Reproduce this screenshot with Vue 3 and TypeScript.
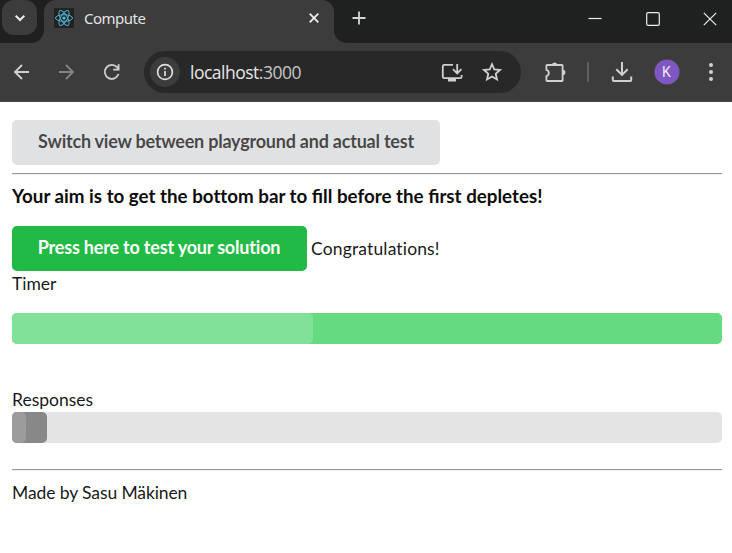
<script setup lang="ts">
import { computed, ref } from 'vue'

const timer = ref(100)
const timerPulse = ref(42.4)
const responses = ref(4.93)
const responsesPulse = ref(40)
const timerStyle = computed(() => ({ width: `${timer.value}%` }))
const timerPulseStyle = computed(() => ({ width: `${timerPulse.value}%` }))
const responsesStyle = computed(() => ({ width: `${responses.value}%` }))
const responsesPulseStyle = computed(() => ({ width: `${responsesPulse.value}%` }))
</script>

<template>
  <div class="window">
    <header class="tabstrip">
      <div class="search-wrap">
        <button class="tab-search" aria-label="Search tabs">
          <svg width="12" height="8" viewBox="0 0 12 8"><path d="M1.7 1.7 6 6l4.3-4.3" /></svg>
        </button>
      </div>
      <div class="tab-slot">
        <div class="tab">
          <svg class="favicon" width="20" height="20" viewBox="0 0 20 20">
            <rect width="20" height="20" rx="1.5" />
            <g transform="translate(10 10)">
              <ellipse rx="8.5" ry="3.3" />
              <ellipse rx="8.5" ry="3.3" transform="rotate(60)" />
              <ellipse rx="8.5" ry="3.3" transform="rotate(120)" />
              <circle r="1.6" />
            </g>
          </svg>
          <span class="tab-title">Compute</span>
          <svg class="tab-close" width="12" height="12" viewBox="0 0 12 12"><path d="m1.7 1.7 8.6 8.6m0-8.6-8.6 8.6" /></svg>
        </div>
      </div>
      <div class="strip-end">
        <svg class="new-tab" width="14" height="14" viewBox="0 0 14 14"><path d="M7 .5v13M.5 7h13" /></svg>
        <div class="controls">
          <svg width="14" height="14" viewBox="0 0 14 14"><path d="M.5 6.5h13" /></svg>
          <svg width="14" height="14" viewBox="0 0 14 14"><rect x=".7" y=".7" width="12.6" height="12.6" rx="1.4" /></svg>
          <svg width="14" height="14" viewBox="0 0 14 14"><path d="m.8.8 12.4 12.4m0-12.4L.8 13.2" /></svg>
        </div>
      </div>
    </header>

    <nav class="toolbar">
      <svg class="icon back" width="24" height="24" viewBox="0 0 24 24"><path d="M19 12H5.5M12 5l-7 7 7 7" /></svg>
      <svg class="icon forward" width="24" height="24" viewBox="0 0 24 24"><path d="M5 12h13.5M12 5l7 7-7 7" /></svg>
      <svg class="icon reload" width="24" height="24" viewBox="0 0 24 24"><path d="M18.5 14A7 7 0 1 1 17 7.2l1.5 1.7M18.6 4.2v5.4h-5.4" /></svg>
      <div class="address">
        <span class="info">
          <svg width="18" height="18" viewBox="0 0 18 18"><circle cx="9" cy="9" r="7.4" /><path d="M9 8v5M9 4.8v1.8" /></svg>
        </span>
        <span class="url">localhost<span class="port">:3000</span></span>
        <svg class="icon install" width="24" height="24" viewBox="0 0 24 24">
          <path d="M13 4.8H4.2a1.4 1.4 0 0 0-1.4 1.4v10.6a1.4 1.4 0 0 0 1.4 1.4h16a1.4 1.4 0 0 0 1.4-1.4V15M17.2 4v9M13 9.2l4.2 4.2 4.2-4.2" />
          <path class="solid" d="M8 18h8v3.5H8z" />
        </svg>
        <svg class="icon star" width="24" height="24" viewBox="0 0 24 24"><path d="m12 4.2 2.3 5.3 5.7.5-4.300 3.800 1.300 5.700-5-3-5 3 1.300-5.700L4 10l5.700-.5z" /></svg>
      </div>
      <svg class="icon extension" width="24" height="24" viewBox="0 0 24 24">
        <path d="M4.2 5h14.6a.8.8 0 0 1 .8.8v14.4a.8.8 0 0 1-.8.8H4.2a.8.8 0 0 1-.8-.8v-4.1a3.2 3.2 0 0 0 0-6.2V5.8a.8.8 0 0 1 .8-.8z" />
        <path class="solid" d="M9 5a2.6 2.6 0 0 1 5.2 0zM19.8 9.8a2.6 2.6 0 0 1 0 5.2z" />
      </svg>
      <span class="separator" />
      <svg class="icon download" width="24" height="24" viewBox="0 0 24 24"><path d="M12 2v12.5M6.3 9.2 12 14.9l5.7-5.7M2.8 16.5v3.6a1 1 0 0 0 1 1h16.4a1 1 0 0 0 1-1v-3.6" /></svg>
      <span class="avatar">K</span>
      <svg class="menu" width="4" height="20" viewBox="0 0 4 20"><circle cx="2" cy="3" r="2" /><circle cx="2" cy="10" r="2" /><circle cx="2" cy="17" r="2" /></svg>
    </nav>

    <main class="page">
      <button class="button switch">Switch view between playground and actual test</button>
      <hr />
      <h3>Your aim is to get the bot&zwnj;tom bar to fill before the first depletes!</h3>
      <div class="action">
        <button class="button positive">Press here to test your solution</button>
        <span class="result">Congratulations!</span>
      </div>
      <div class="label">Timer</div>
      <div class="progress timer">
        <div class="bar" :style="timerStyle"><div class="pulse" :style="timerPulseStyle" /></div>
      </div>
      <div class="label">Responses</div>
      <div class="progress responses">
        <div class="bar" :style="responsesStyle"><div class="pulse" :style="responsesPulseStyle" /></div>
      </div>
      <hr />
      <footer class="label">Made by Sasu Mäkinen</footer>
    </main>
  </div>
</template>

<style>
body {
  margin: 0;
  background: #fff;
}
</style>

<style scoped>
* {
  box-sizing: border-box;
}
.window {
  height: 553px;
  overflow: hidden;
  background: #fff;
}
button {
  border: 0;
  padding: 0;
}
svg {
  display: block;
  flex: none;
  fill: none;
}
.tabstrip {
  display: flex;
  height: 43px;
  background: #3c3c3c;
}
.search-wrap {
  width: 44px;
  padding-left: 2px;
  background: #1f2120;
  border-bottom-right-radius: 13px;
}
.tab-search {
  display: grid;
  place-items: center;
  width: 35px;
  height: 35px;
  border-radius: 12px;
  background: #3c3c3c;
}
.tab-search path {
  stroke: #eee;
  stroke-width: 2;
}
.tab-slot {
  width: 290px;
  background: linear-gradient(#1f2120 50%, #3c3c3c 50%);
}
.tab {
  display: flex;
  align-items: center;
  height: 43px;
  padding: 0 14px 7px 10px;
  background: #3c3c3c;
  border-radius: 12px 12px 0 0;
}
.favicon rect {
  fill: #222;
}
.favicon ellipse {
  stroke: #4fb3d1;
  stroke-width: 1;
}
.favicon circle {
  fill: #5bc4e2;
}
.tab-title {
  margin-left: 10px;
  font: 15px/20px "Noto Sans", sans-serif;
  letter-spacing: -0.5px;
  color: #e3e3e3;
}
.tab-close {
  margin-left: auto;
}
.tab-close path {
  stroke: #eee;
  stroke-width: 1.8;
}
.strip-end {
  display: flex;
  flex: 1;
  background: #1f2120;
  border-bottom-left-radius: 13px;
}
.new-tab {
  margin: 11px 0 0 18px;
}
.new-tab path {
  stroke: #d5d5d5;
  stroke-width: 1.8;
}
.controls {
  display: flex;
  gap: 43px;
  margin: 12px 15px 0 auto;
}
.controls svg:first-child {
  margin-right: 1px;
  margin-left: -1px;
}
.controls path,
.controls rect {
  stroke: #eee;
  stroke-width: 1.2;
}
.toolbar {
  display: flex;
  align-items: center;
  height: 59px;
  padding: 0 19px 0 10px;
  background: #3c3c3c;
  border-bottom: 1px solid #4a4a4a;
}
.icon path {
  stroke: #d0d0d0;
  stroke-width: 1.8;
}
.icon .solid {
  fill: #d0d0d0;
  stroke: none;
}
.icon.forward {
  margin-left: 20px;
}
.icon.forward path {
  stroke: #858585;
}
.reload {
  margin-left: 22px;
}
.address {
  display: flex;
  align-items: center;
  width: 377px;
  height: 42px;
  margin-left: 20px;
  padding: 0 17.5px 0 6px;
  border-radius: 21px;
  background: #282828;
}
.info {
  display: grid;
  place-items: center;
  width: 30px;
  height: 30px;
  border-radius: 50%;
  background: #3c3c3c;
}
.info circle,
.info path {
  stroke: #e0e0e0;
  stroke-width: 1.7;
}
.url {
  margin-left: 10px;
  font: 17.5px/24px "Open Sans", sans-serif;
  letter-spacing: -0.5px;
  color: #e6e6e6;
}
.port {
  color: #c6c6c6;
}
.install {
  margin-left: auto;
}
.star {
  margin-left: 16px;
}
.extension {
  margin-left: 22px;
}
.separator {
  width: 2px;
  height: 20px;
  margin-left: 20px;
  background: #606060;
}
.download {
  margin-left: 20.5px;
}
.download path {
  stroke-width: 2;
}
.avatar {
  display: grid;
  place-items: center;
  width: 26px;
  height: 26px;
  margin-left: 20px;
  border-radius: 50%;
  background: #7e57c2;
  box-shadow: inset 0 0 0 0.5px #3a3c20;
  font: 14px/26px Roboto, sans-serif;
  color: #f0eaf8;
}
.menu {
  margin-left: auto;
}
.menu circle {
  fill: #d0d0d0;
}
.page {
  padding: 18px 10px 0 12px;
  font-family: Lato, sans-serif;
  font-size: 17.5px;
  color: rgba(0, 0, 0, 0.92);
}
.button {
  display: block;
  height: 45px;
  padding: 0 0 3px;
  border-radius: 5px;
  font: 700 18px/42px Lato, sans-serif;
  letter-spacing: -0.22px;
  white-space: nowrap;
}
.switch {
  width: 428px;
  background: #e0e1e2;
  color: rgba(0, 0, 0, 0.7);
}
hr {
  height: 2px;
  margin: 8px 0 0;
  border: 0;
  border-top: 1px solid #999;
  border-bottom: 1px solid #eee;
}
h3 {
  margin: 9px 0 0;
  font: 700 18.75px/24px Lato, sans-serif;
  color: #0c0c0c;
  white-space: nowrap;
}
.action {
  display: flex;
  margin-top: 18px;
}
.positive {
  width: 295px;
  padding-right: 1px;
  background: #21ba45;
  color: #fff;
  letter-spacing: -0.19px;
}
.result {
  margin-left: 4px;
  line-height: 45px;
  letter-spacing: 0.15px;
}
.label {
  height: 25px;
  line-height: 25px;
}
.progress {
  height: 31px;
  border-radius: 5px;
  background: #e4e4e4;
}
.bar,
.pulse {
  height: 100%;
  border-radius: 5px;
}
.timer {
  margin: 17px 0 43px;
}
.timer .bar {
  background: #66da81;
}
.timer .pulse {
  background: #82e199;
}
.responses {
  margin-bottom: 26px;
}
.responses .bar {
  background: #888;
}
.responses .pulse {
  background: #9c9c9c;
}
footer {
  margin-top: 9px;
  letter-spacing: -0.1px;
}
</style>
